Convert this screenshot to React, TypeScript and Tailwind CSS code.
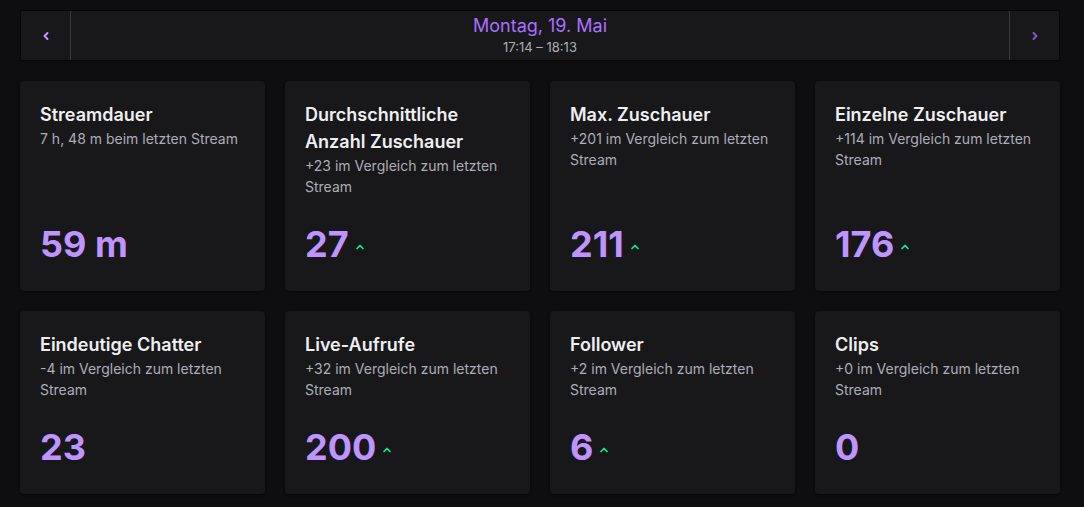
import { ChevronLeft, ChevronRight, ChevronUp } from "lucide-react";

type Stat = {
  title: string;
  sub: string;
  value: string;
  up?: boolean;
};

const stats: Stat[] = [
  { title: "Streamdauer", sub: "7 h, 48 m beim letzten Stream", value: "59 m" },
  { title: "Durchschnittliche Anzahl Zuschauer", sub: "+23 im Vergleich zum letzten Stream", value: "27", up: true },
  { title: "Max. Zuschauer", sub: "+201 im Vergleich zum letzten Stream", value: "211", up: true },
  { title: "Einzelne Zuschauer", sub: "+114 im Vergleich zum letzten Stream", value: "176", up: true },
  { title: "Eindeutige Chatter", sub: "-4 im Vergleich zum letzten Stream", value: "23" },
  { title: "Live-Aufrufe", sub: "+32 im Vergleich zum letzten Stream", value: "200", up: true },
  { title: "Follower", sub: "+2 im Vergleich zum letzten Stream", value: "6", up: true },
  { title: "Clips", sub: "+0 im Vergleich zum letzten Stream", value: "0" },
];

function StatCard({ stat }: { stat: Stat }) {
  return (
    <div className="flex flex-col bg-[#18181b] rounded-[4px] shadow-[0_1px_3px_rgba(0,0,0,0.6)] pt-5 px-5 pb-[27px]">
      <h3 className="text-[18px] leading-[27px] font-semibold text-[#efeff1]">{stat.title}</h3>
      <p className="text-[14px] leading-[21px] text-[#adadb8]">{stat.sub}</p>
      <div className="mt-auto pt-[27px] flex items-center">
        <span className="text-[36px] leading-[40px] font-bold text-[#bf94ff]">{stat.value}</span>
        {stat.up && <ChevronUp size={12} strokeWidth={3.5} className="text-[#00f593] ml-[5px] mt-[6px]" />}
      </div>
    </div>
  );
}

export default function App() {
  return (
    <main
      className="min-h-screen bg-[#0e0e10] pl-5 pt-[10px] pb-4"
      style={{ fontFamily: "Inter, 'Noto Sans', sans-serif" }}
    >
      <div className="w-[1040px]">
        {/* Date switcher */}
        <div className="flex h-[51px] bg-[#18181b] border border-[#070708] rounded-[2px]">
          <button className="w-[50px] flex items-center justify-center border-r border-[#3a3a3d] text-[#bf94ff]">
            <ChevronLeft size={12} strokeWidth={4} />
          </button>
          <div className="flex-1 flex flex-col items-center pt-[3px]">
            <span className="text-[18px] leading-[24px] text-[#a970ff]">Montag, 19. Mai</span>
            <span className="text-[13px] leading-[18px] text-[#adadb8]">17:14 – 18:13</span>
          </div>
          <button className="w-[50px] flex items-center justify-center border-l border-[#3a3a3d] text-[#7d5bbe]">
            <ChevronRight size={12} strokeWidth={4} />
          </button>
        </div>

        {/* Stats */}
        <div className="grid grid-cols-4 gap-5 mt-5">
          {stats.map((s) => (
            <StatCard key={s.title} stat={s} />
          ))}
        </div>
      </div>
    </main>
  );
}
